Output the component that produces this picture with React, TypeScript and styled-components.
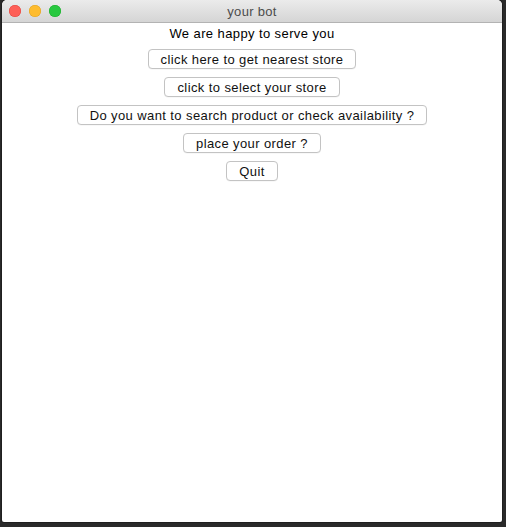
import React from "react";
import styled, { createGlobalStyle } from "styled-components";

const Global = createGlobalStyle`
  html, body { margin: 0; padding: 0; }
  body {
    background: #2b2b2b;
    width: 506px;
    height: 527px;
    overflow: hidden;
    font-family: "Liberation Sans", Arial, sans-serif;
  }
`;

const Desktop = styled.div`
  width: 506px;
  height: 527px;
  display: flex;
  background: #2a2a2a;
`;

const Window = styled.div`
  margin-left: 2px;
  width: 500px;
  height: 522px;
  display: flex;
  flex-direction: column;
  background: #ffffff;
  border-radius: 5px 5px 2px 2px;
  overflow: hidden;
  box-shadow: 0 0 0 1px rgba(0, 0, 0, 0.25);
`;

const TitleBar = styled.div`
  height: 22px;
  flex: none;
  display: flex;
  align-items: center;
  position: relative;
  background: linear-gradient(#ebebeb, #d5d5d5);
  border-bottom: 1px solid #b3b3b3;
  padding-left: 7px;
  gap: 8px;
`;

const Light = styled.span<{ $c: string; $b: string }>`
  width: 12px;
  height: 12px;
  border-radius: 50%;
  background: ${(p) => p.$c};
  box-shadow: inset 0 0 0 0.5px ${(p) => p.$b};
`;

const Title = styled.div`
  position: absolute;
  left: 0;
  right: 0;
  top: 0;
  height: 22px;
  line-height: 24px;
  text-align: center;
  font-size: 13px;
  letter-spacing: 0.3px;
  color: #4c4c4c;
  pointer-events: none;
`;

const Content = styled.div`
  flex: 1;
  display: flex;
  flex-direction: column;
  align-items: center;
  padding-top: 4px;
  gap: 8px;
`;

const Label = styled.div`
  font-size: 13px;
  line-height: 14px;
  height: 14px;
  letter-spacing: 0.4px;
  color: #000;
`;

const Button = styled.button`
  box-sizing: border-box;
  height: 20px;
  padding: 1px 12px 0;
  margin: 0;
  font-family: "Liberation Sans", Arial, sans-serif;
  font-size: 13px;
  line-height: 17px;
  letter-spacing: 0.4px;
  color: #111;
  background: #ffffff;
  border: 1px solid #c3c3c3;
  border-radius: 4px;
  box-shadow: 0 0.5px 0 rgba(0, 0, 0, 0.06);
`;

const buttons = [
  "click here to get nearest store",
  "click to select your store",
  "Do you want to search product or check availability ?",
  "place your order ?",
  "Quit",
];

export default function App() {
  return (
    <>
      <Global />
      <Desktop>
        <Window>
          <TitleBar>
            <Light $c="#fe5f57" $b="#e0443e" />
            <Light $c="#febc2e" $b="#dea123" />
            <Light $c="#28c840" $b="#1aab29" />
            <Title>your bot</Title>
          </TitleBar>
          <Content>
            <Label>We are happy to serve you</Label>
            {buttons.map((b) => (
              <Button key={b}>{b}</Button>
            ))}
          </Content>
        </Window>
      </Desktop>
    </>
  );
}
